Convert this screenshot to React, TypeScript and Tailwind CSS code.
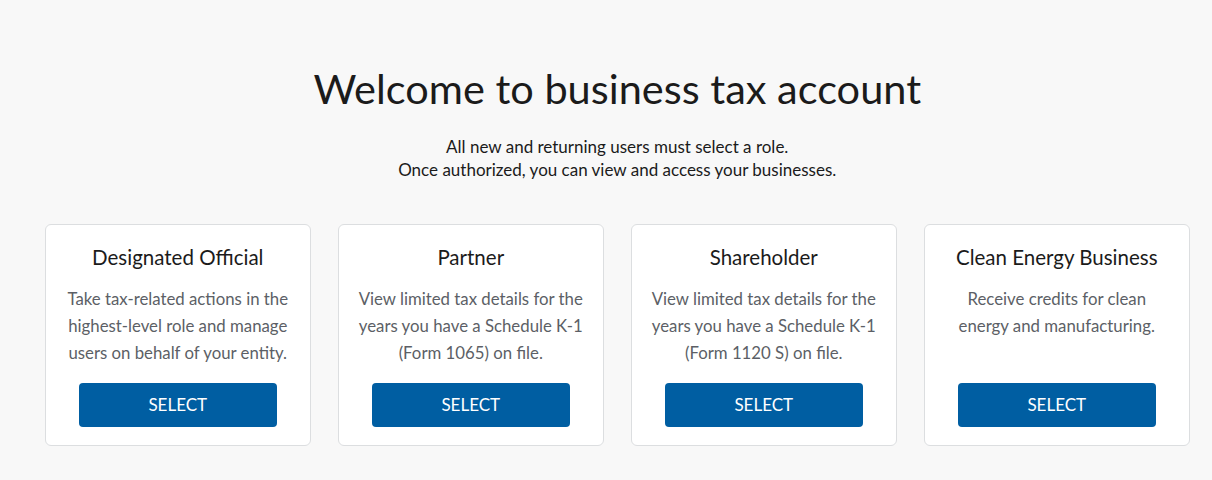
const roles = [
  {
    title: 'Designated Official',
    lines: ['Take tax-related actions in the', 'highest-level role and manage', 'users on behalf of your entity.'],
  },
  {
    title: 'Partner',
    lines: ['View limited tax details for the', 'years you have a Schedule K-1', '(Form 1065) on file.'],
  },
  {
    title: 'Shareholder',
    lines: ['View limited tax details for the', 'years you have a Schedule K-1', '(Form 1120 S) on file.'],
  },
  {
    title: 'Clean Energy Business',
    lines: ['Receive credits for clean', 'energy and manufacturing.'],
  },
];

export default function App() {
  return (
    <div className="min-h-[480px] w-full bg-[#f8f8f8] pl-[45px] pr-[22.5px] pt-[64px] font-['Lato','Noto_Sans',sans-serif] text-[#1b1b1b]">
      <h1 className="text-center text-[41.5px] leading-[48px] font-normal">Welcome to business tax account</h1>
      <p className="mt-[23px] text-center text-[17px] leading-[23px]">
        All new and returning users must select a role.
        <br />
        Once authorized, you can view and access your businesses.
      </p>

      <div className="mt-[43px] grid grid-cols-4 gap-[27.5px]">
        {roles.map(r => (
          <div
            key={r.title}
            className="flex h-[222px] flex-col rounded-md border border-[#dcdee0] bg-white px-4 pt-[18px] pb-[18px] text-center"
          >
            <h2 className="text-[20.5px] leading-[28px] font-normal">{r.title}</h2>
            <p className="mt-[14px] text-[16.8px] leading-[27px] text-[#5c5f66]">
              {r.lines.map((l, i) => (
                <span key={i}>
                  {l}
                  {i < r.lines.length - 1 && <br />}
                </span>
              ))}
            </p>
            <button className="mx-auto mt-auto h-[44px] w-[198px] rounded bg-[#005ea2] text-[17px] text-white uppercase">
              Select
            </button>
          </div>
        ))}
      </div>
    </div>
  );
}
